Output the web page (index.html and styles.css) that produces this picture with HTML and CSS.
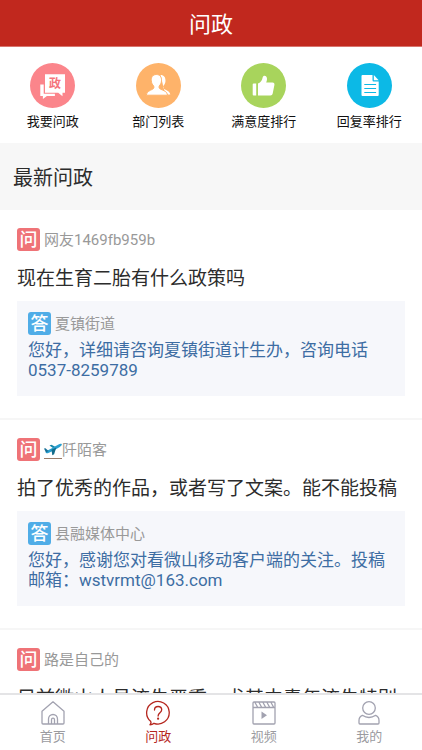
FILE: index.html
```html
<!DOCTYPE html>
<html lang="zh-CN">
<head>
<meta charset="utf-8">
<meta name="viewport" content="width=device-width, initial-scale=1">
<title>问政</title>
<link rel="stylesheet" href="styles.css">
</head>
<body>
<div class="app">
  <header class="topbar"><h1>问政</h1></header>

  <main class="content">
    <nav class="shortcuts" aria-label="问政服务">
      <a href="#ask">
        <svg class="disc" viewBox="0 0 45 45" aria-hidden="true">
          <circle cx="22.5" cy="22.5" r="22.5" fill="#fb858b"/>
          <path d="M10.3 21.500h3.400v9.200h11.200v2.300h-8l-4 3v-3h-2.600z" fill="#fff"/>
          <path d="M15 11.200h20v18.500h-2.500v3.600l-4.300-3.600H15z" fill="#fff"/>
          <text x="25" y="25" text-anchor="middle" class="disc-text">政</text>
        </svg>
        <span>我要问政</span>
      </a>
      <a href="#departments">
        <svg class="disc" viewBox="0 0 45 45" aria-hidden="true">
          <circle cx="22.5" cy="22.5" r="22.5" fill="#feb36a"/>
          <path d="M24.500 12c3.600 0 5.200 2.600 5 6-.1 2-1 3.800-2.200 5-.5 1.500.1 2.600 1.300 3.300 2.700 1.500 5 2 5.700 5.200h-5z" fill="#fff"/>
          <path d="M20.300 11.500c3.700 0 5.500 2.600 5.200 6.300-.2 2.200-1 4-2.300 5.200-.4 1.600 0 2.500 1.200 3.100 3.500 1.600 6.800 2.300 7.200 6.100H10.300c.3-3.800 3.600-4.500 6.500-6.100 1.100-.6 1.300-1.600.9-3.100-1.300-1.200-2.200-3-2.400-5.200-.3-3.700 1.400-6.300 5-6.300z" fill="#fff" stroke="#feb36a" stroke-width="1"/>
        </svg>
        <span>部门列表</span>
      </a>
      <a href="#satisfaction">
        <svg class="disc" viewBox="0 0 45 45" aria-hidden="true">
          <circle cx="22.5" cy="22.5" r="22.5" fill="#a8d45c"/>
          <path d="M12.700 20.500h2.500v12h-2.500q-1 0-1-1v-10q0-1 1-1z" fill="#fff"/>
          <path d="M17 20.500c3-1 4.200-3.500 4.700-6.300.3-1.700 2.200-2 3.300-1 1.500 1.500 1.200 4 .2 6.300h6.300c1.500 0 2.200 1 1.900 2.400l-1.700 8.600c-.3 1.300-1 2-2.300 2H17z" fill="#fff"/>
        </svg>
        <span>满意度排行</span>
      </a>
      <a href="#replies">
        <svg class="disc" viewBox="0 0 45 45" aria-hidden="true">
          <circle cx="22.5" cy="22.5" r="22.5" fill="#0cb9e6"/>
          <path d="M15.500 12h10v5.300q0 1.200 1.200 1.200h5V32q0 1-1 1H15.500q-1 0-1-1V13q0-1 1-1z" fill="#fff"/>
          <path d="M26.800 12l4.900 5.200h-4.900z" fill="#fff"/>
          <path d="M17.300 21.500h11.800M17.300 25.500h11.800M17.300 29.500h11.800" stroke="#0cb9e6" stroke-width="1"/>
        </svg>
        <span>回复率排行</span>
      </a>
    </nav>

    <h2 class="section-title">最新问政</h2>

    <article class="entry">
      <div class="byline"><span class="badge ask">问</span><span>网友1469fb959b</span></div>
      <h3>现在生育二胎有什么政策吗</h3>
      <section class="answer">
        <div class="byline"><span class="badge reply">答</span><span>夏镇街道</span></div>
        <p>您好，详细请咨询夏镇街道计生办，咨询电话0537-8259789</p>
      </section>
    </article>

    <article class="entry">
      <div class="byline"><span class="badge ask">问</span><svg class="plane" viewBox="0 0 18 23" aria-hidden="true">
          <path d="M0 20.500h18" stroke="#9a7b68" stroke-width="1"/>
          <path d="M5.500 7.500l2-.7 5 2.700-2.500 1.200z" fill="#1686a8"/>
          <path d="M1.500 13.800C5 11.500 10.500 9 14.500 6.500c1.500-.9 3-.8 3.300-.2.300.8-.8 1.800-2 2.600-4 2.500-8.500 5-12 6.300-1.200.4-2.300-.4-2.300-1.400z" fill="#299fd0"/>
          <path d="M0 10.500l1.500-.3 3 2.800-2.500 1.500z" fill="#176f96"/>
          <path d="M7.500 11.700l4.800-2.200-2.200 6.800-1.800.9z" fill="#126b8a"/>
        </svg><span>阡陌客</span></div>
      <h3>拍了优秀的作品，或者写了文案。能不能投稿</h3>
      <section class="answer">
        <div class="byline"><span class="badge reply">答</span><span>县融媒体中心</span></div>
        <p>您好，感谢您对看微山移动客户端的关注。投稿邮箱：wstvrmt@163.com</p>
      </section>
    </article>

    <article class="entry">
      <div class="byline"><span class="badge ask">问</span><span>路是自己的</span></div>
      <h3>目前微山人员流失严重，尤其中青年流失特别</h3>
    </article>
  </main>

  <nav class="tabs" aria-label="主导航">
    <a href="#home">
      <svg viewBox="0 0 26 26" aria-hidden="true"><path d="M2 11.200L13 1.800l11 9.400V23q0 1-1 1H3q-1 0-1-1zM8.500 24v-5a4.500 4.500 0 0 1 9 0v5M11.500 24v-4.300a1.500 1.500 0 0 1 3 0V24"/></svg>
      <span>首页</span>
    </a>
    <a href="#questions" class="active" aria-current="page">
      <svg viewBox="0 0 26 26" aria-hidden="true"><path d="M9 23.300A11.300 11.300 0 1 0 5.600 21.300M5.600 21.300q1 1.700-.6 3.500 2.300 0 4-1.500M9.500 10c0-2.200 1.400-3.500 3.600-3.500 2.100 0 3.600 1.300 3.600 3.200 0 2.900-3.600 3.300-3.600 6.300"/><circle class="solid" cx="13.100" cy="18.700" r="1.100"/></svg>
      <span>问政</span>
    </a>
    <a href="#video">
      <svg viewBox="0 0 26 26" aria-hidden="true"><path d="M2 3q0-1 1-1h20q1 0 1 1v20q0 1-1 1H3q-1 0-1-1zM2 7.500h22M4 2.500l2.500 4.500M8 2.500l2.500 4.500M12 2.500l2.500 4.500M16 2.500l2.500 4.500M20 2.500l2.500 4.500"/><path class="solid" d="M10.500 11.500l5.500 3.800-5.500 3.800z"/></svg>
      <span>视频</span>
    </a>
    <a href="#me">
      <svg viewBox="0 0 26 26" aria-hidden="true"><circle cx="13" cy="8" r="6.300"/><path d="M6.300 15.300C4 16.300 3 18.300 3 20.500V23q0 1 1 1h18q1 0 1-1v-2.500c0-2.200-1-4.200-3.300-5.200-4 2.600-9.400 2.600-13.400 0z"/></svg>
      <span>我的</span>
    </a>
  </nav>
</div>
</body>
</html>
```
FILE: styles.css
```css
* {
  box-sizing: border-box;
}

body {
  margin: 0;
  background: #fff;
  color: #2c2c2c;
  font-family: Roboto, "Noto Sans CJK SC", sans-serif;
}

h1, h2, h3, p {
  margin: 0;
  font-weight: 400;
}

a {
  color: inherit;
  text-decoration: none;
}

svg {
  display: block;
}

.app {
  display: flex;
  flex-direction: column;
  height: 100vh;
}

.topbar {
  flex: none;
  padding: 10px 0 6px;
  border-bottom: 1px solid #d8756e;
  background: #c1281e;
  color: #fff;
  text-align: center;
}

.topbar h1 {
  font-size: 22px;
  line-height: 30px;
}

.content {
  flex: 1;
  min-height: 0;
  overflow: hidden;
}

.shortcuts {
  display: grid;
  grid-template-columns: repeat(4, 1fr);
  padding: 16px 0 11px;
  color: #111;
  font-size: 13px;
  line-height: 20px;
}

.shortcuts a {
  display: flex;
  flex-direction: column;
  align-items: center;
  gap: 4px;
}

.disc {
  width: 45px;
  height: 45px;
}

.disc-text {
  fill: #f5757c;
  font-size: 12px;
  font-weight: 700;
}

.section-title {
  padding: 21px 13px 18px;
  background: #f7f7f7;
  font-size: 20px;
  line-height: 28px;
}

.entry {
  padding: 18px 17px 22px;
  border-bottom: 2px solid #f6f6f6;
}

.entry h3 {
  padding: 13px 0 9px;
  font-size: 19px;
  line-height: 26px;
}

.byline {
  display: flex;
  align-items: flex-start;
  color: #999;
  font-size: 15px;
  line-height: 25px;
}

.badge {
  width: 23px;
  height: 23px;
  margin-right: 4px;
  border-radius: 3px;
  color: #fff;
  font-size: 18px;
  font-weight: 500;
  line-height: 24px;
  text-align: center;
}

.ask {
  background: #ef7377;
}

.reply {
  background: #50ade7;
}

.plane {
  width: 18px;
  height: 23px;
}

.answer {
  padding: 11px 11px 16px;
  background: #f6f7fb;
}

.answer p {
  padding-top: 3px;
  color: #3d6da3;
  font-size: 17px;
  line-height: 20px;
}

.tabs {
  display: grid;
  flex: none;
  grid-template-columns: repeat(4, 1fr);
  padding: 5px 0 3px;
  border-top: 2px solid #e4e4e6;
  background: #fff;
  color: #9b9b9f;
  font-size: 13px;
  line-height: 20px;
}

.tabs a {
  display: flex;
  flex-direction: column;
  align-items: center;
  gap: 1px;
}

.tabs svg {
  width: 26px;
  height: 26px;
  fill: none;
  stroke: #a2a2b0;
  stroke-width: 1.3;
  stroke-linecap: round;
  stroke-linejoin: round;
}

.tabs .solid {
  fill: #a2a2b0;
  stroke: none;
}

.tabs .active {
  color: #b5261e;
}

.tabs .active svg {
  stroke: #b5261e;
}

.tabs .active .solid {
  fill: #b5261e;
}
```
